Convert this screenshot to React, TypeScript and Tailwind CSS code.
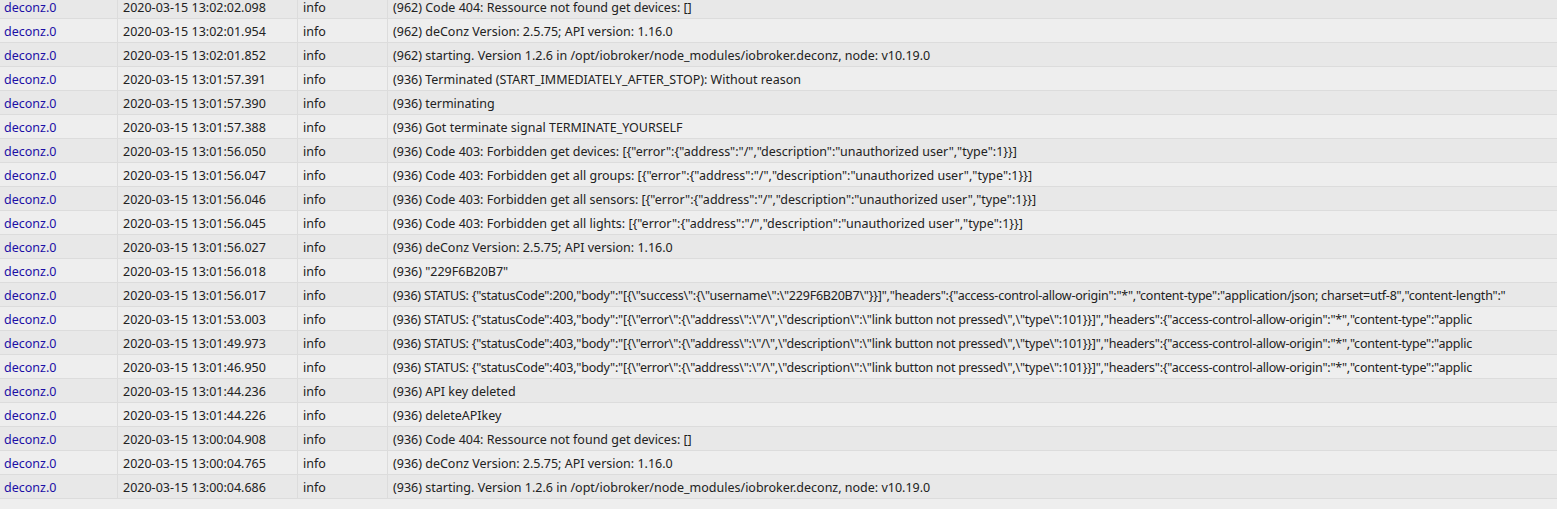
const rows: [string, string][] = [
  ["13:02:02.098", String.raw`(962) Code 404: Ressource not found get devices: []`],
  ["13:02:01.954", String.raw`(962) deConz Version: 2.5.75; API version: 1.16.0`],
  ["13:02:01.852", String.raw`(962) starting. Version 1.2.6 in /opt/iobroker/node_modules/iobroker.deconz, node: v10.19.0`],
  ["13:01:57.391", String.raw`(936) Terminated (START_IMMEDIATELY_AFTER_STOP): Without reason`],
  ["13:01:57.390", String.raw`(936) terminating`],
  ["13:01:57.388", String.raw`(936) Got terminate signal TERMINATE_YOURSELF`],
  ["13:01:56.050", String.raw`(936) Code 403: Forbidden get devices: [{"error":{"address":"/","description":"unauthorized user","type":1}}]`],
  ["13:01:56.047", String.raw`(936) Code 403: Forbidden get all groups: [{"error":{"address":"/","description":"unauthorized user","type":1}}]`],
  ["13:01:56.046", String.raw`(936) Code 403: Forbidden get all sensors: [{"error":{"address":"/","description":"unauthorized user","type":1}}]`],
  ["13:01:56.045", String.raw`(936) Code 403: Forbidden get all lights: [{"error":{"address":"/","description":"unauthorized user","type":1}}]`],
  ["13:01:56.027", String.raw`(936) deConz Version: 2.5.75; API version: 1.16.0`],
  ["13:01:56.018", String.raw`(936) "229F6B20B7"`],
  ["13:01:56.017", String.raw`(936) STATUS: {"statusCode":200,"body":"[{\"success\":{\"username\":\"229F6B20B7\"}}]","headers":{"access-control-allow-origin":"*","content-type":"application/json; charset=utf-8","content-length":"`],
  ["13:01:53.003", String.raw`(936) STATUS: {"statusCode":403,"body":"[{\"error\":{\"address\":\"/\",\"description\":\"link button not pressed\",\"type\":101}}]","headers":{"access-control-allow-origin":"*","content-type":"applic`],
  ["13:01:49.973", String.raw`(936) STATUS: {"statusCode":403,"body":"[{\"error\":{\"address\":\"/\",\"description\":\"link button not pressed\",\"type\":101}}]","headers":{"access-control-allow-origin":"*","content-type":"applic`],
  ["13:01:46.950", String.raw`(936) STATUS: {"statusCode":403,"body":"[{\"error\":{\"address\":\"/\",\"description\":\"link button not pressed\",\"type\":101}}]","headers":{"access-control-allow-origin":"*","content-type":"applic`],
  ["13:01:44.236", String.raw`(936) API key deleted`],
  ["13:01:44.226", String.raw`(936) deleteAPIkey`],
  ["13:00:04.908", String.raw`(936) Code 404: Ressource not found get devices: []`],
  ["13:00:04.765", String.raw`(936) deConz Version: 2.5.75; API version: 1.16.0`],
  ["13:00:04.686", String.raw`(936) starting. Version 1.2.6 in /opt/iobroker/node_modules/iobroker.deconz, node: v10.19.0`],
];

export default function App() {
  return (
    <div className="h-[509px] overflow-hidden bg-[#eeeeee] font-['Noto_Sans',sans-serif] text-[12.5px] text-[#222222]">
      <div className="-mt-[5px]">
        {rows.map(([time, msg], i) => (
          <div
            key={i}
            className={`flex h-[24px] items-center border-b border-[#dcdcdc] ${i % 2 === 0 ? "bg-[#e8e8e8]" : "bg-[#eeeeee]"}`}
          >
            <div className="flex h-full w-[118px] shrink-0 items-center border-r border-[#dcdcdc] pl-[4px] pt-[3px] text-[#1c0fa6]">
              deconz.0
            </div>
            <div className="flex h-full w-[180px] shrink-0 items-center border-r border-[#dcdcdc] pl-[5px] pt-[3px]">
              2020-03-15 {time}
            </div>
            <div className="flex h-full w-[90px] shrink-0 items-center border-r border-[#dcdcdc] pl-[5px] pt-[3px]">
              info
            </div>
            <div
              className={`flex h-full min-w-0 flex-1 items-center overflow-hidden whitespace-nowrap pl-[5px] pt-[3px] ${msg.includes("STATUS:") ? "tracking-[-0.22px]" : ""}`}
            >
              {msg}
            </div>
          </div>
        ))}
      </div>
    </div>
  );
}
